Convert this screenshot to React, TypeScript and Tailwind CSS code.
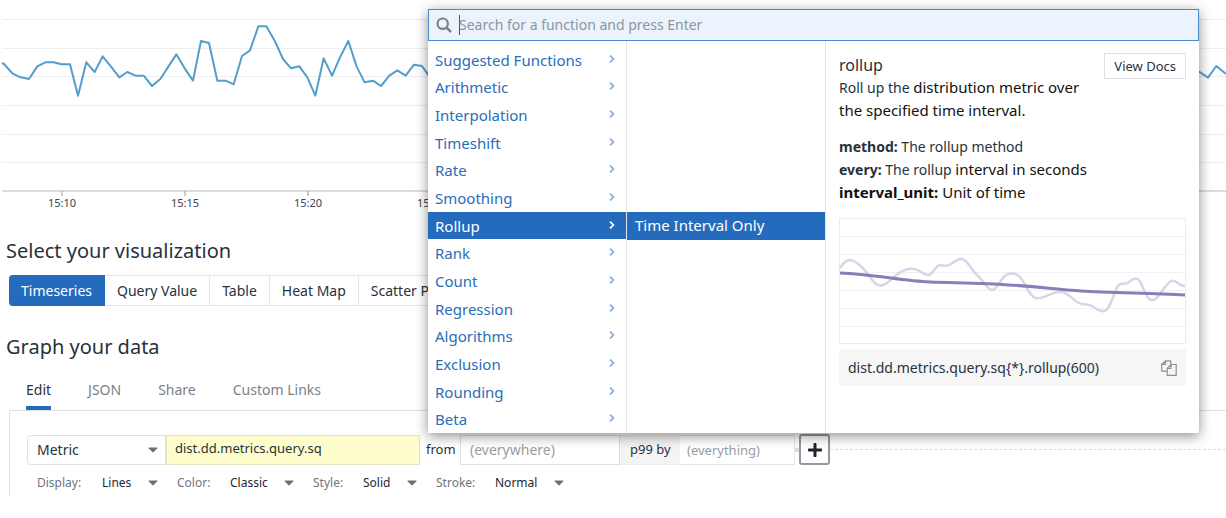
import { useState } from "react";
import { FaPlus } from "react-icons/fa";

const SERIES = [
  [6, 189], [12, 192], [38, 221], [62, 232], [87, 237], [112, 199], [136, 187], [160, 187], [185, 193], [210, 193],
  [234, 287], [259, 187], [284, 216], [308, 169], [333, 200], [358, 232], [382, 216], [406, 227], [431, 227],
  [456, 258], [481, 237], [505, 200], [529, 163], [554, 205], [579, 242], [603, 123], [627, 129], [652, 242],
  [677, 242], [701, 253], [726, 168], [750, 151], [775, 79], [799, 79], [824, 122], [849, 177], [873, 205],
  [898, 199], [922, 232], [946, 287], [971, 175], [996, 227], [1020, 172], [1045, 123], [1070, 200], [1094, 247],
  [1119, 242], [1143, 258], [1168, 227], [1192, 211], [1217, 227], [1242, 194], [1266, 198], [1290, 232],
  [3599, 216], [3624, 233], [3649, 198], [3678, 222],
];

const CATEGORIES = [
  "Suggested Functions", "Arithmetic", "Interpolation", "Timeshift", "Rate", "Smoothing", "Rollup",
  "Rank", "Count", "Regression", "Algorithms", "Exclusion", "Rounding", "Beta",
];

function TimeseriesChart() {
  const points = SERIES.map(([x, y]) => `${x / 3},${y / 3}`).join(" ");
  return (
    <svg className="block h-[215px] w-full" role="img" aria-label="Timeseries chart">
      {[19.5, 48.5, 76.5, 105.5, 134.5, 162.5].map((y) => (
        <line key={y} x1="2" x2="100%" y1={y} y2={y} stroke="#eeeeee" />
      ))}
      <line x1="2" x2="100%" y1="191" y2="191" stroke="#cfcfcf" strokeWidth="1.5" />
      <polyline points={points} fill="none" stroke="#559dcb" strokeWidth="2" strokeLinejoin="round" />
      {["15:10", "15:15", "15:20", "15:25"].map((label, i) => {
        const x = 62 + i * 123;
        return (
          <g key={label}>
            <line x1={x} x2={x} y1="191" y2="196" stroke="#999" />
            <text x={x} y="207" textAnchor="middle" fontSize="11" fill="#3b444d">
              {label}
            </text>
          </g>
        );
      })}
    </svg>
  );
}

function Caret() {
  return (
    <svg className="pointer-events-none h-[6px] w-[10px] shrink-0" viewBox="0 0 10 6" fill="#6b7077">
      <path d="M1 0.5h8a.5.5 0 0 1 .4.8L5.4 5.3a.6.6 0 0 1-.8 0L.6 1.3A.5.5 0 0 1 1 .5Z" />
    </svg>
  );
}

function Option({ id, label, value, className }: { id: string; label: string; value: string; className: string }) {
  return (
    <div className={`flex shrink-0 items-center ${className}`}>
      <label htmlFor={id} className="flex-1 text-[#6f767d]">
        {label}:
      </label>
      <div className="grid items-center">
        <select id={id} className="col-start-1 row-start-1 appearance-none bg-transparent pr-[26px] text-[#1c2733] outline-none">
          <option>{value}</option>
        </select>
        <span className="col-start-1 row-start-1 justify-self-end">
          <Caret />
        </span>
      </div>
    </div>
  );
}

function Preview() {
  return (
    <svg className="block h-[126px] w-full" viewBox="0 0 347 126" preserveAspectRatio="none" role="img" aria-label="Rollup preview">
      {[18.5, 36.5, 54.5, 72.5, 90.5, 108.5].map((y) => (
        <line key={y} x1="0" x2="347" y1={y} y2={y} stroke="#f1f1f3" />
      ))}
      <rect x=".5" y=".5" width="346" height="125" fill="none" stroke="#ebebee" />
      <path
        d="M1 50C5 44 8 42 11 42C20 43 29 56 34 63C38 68 41 68 44 67C51 65 55 57 62 54C67 51 73 50 78 52C82 53 86 58 90 57C94 56 96 48 101 47C104 47 106 49 110 47C114 45 119 40 123 41C129 42 132 52 138 57C143 61 148 71 153 72C159 72 162 58 169 56C173 55 177 55 180 58C186 63 190 79 197 80C205 82 213 73 222 74C230 74 234 84 243 86C247 87 249 86 253 88C257 91 261 94 265 93C273 92 275 68 281 66C285 65 287 67 290 64C293 62 295 59 299 61C304 65 306 80 312 82C319 84 325 67 332 63C338 61 340 69 346 68"
        fill="none" stroke="#d8d5e9" strokeWidth="2.5"
      />
      <path
        d="M1 55C34 56 63 63 91 64C119 65 146 65 170 67C195 68 219 72 243 73C270 75 309 75 346 77"
        fill="none" stroke="#8d7cb8" strokeWidth="3"
      />
    </svg>
  );
}

function SearchIcon() {
  return (
    <svg className="size-4 shrink-0" viewBox="0 0 16 16" fill="none" stroke="#7d8287" strokeLinecap="round">
      <circle cx="6.7" cy="6.7" r="5.2" strokeWidth="2.2" />
      <path d="m10.9 10.9 3.4 3.4" strokeWidth="2.6" />
    </svg>
  );
}

function CopyIcon() {
  return (
    <svg className="h-4 w-4" viewBox="0 0 16 16" fill="none" stroke="#8b9096" strokeWidth="1.2" strokeLinejoin="round">
      <path d="M6 11.2H.8V4.3L4.5.9h5.2v3.4M4.5.9v3.4H.8" />
      <path d="M10 4.5h5.2v10.8H6.2V8.3L10 4.5ZM10 4.5v4H6.2" />
    </svg>
  );
}

function FunctionMenu() {
  const [active, setActive] = useState("Rollup");
  return (
    <div className="absolute top-[9px] left-[428px] w-[771px] bg-white text-sm shadow-[0_3px_12px_rgba(0,0,0,0.45)]">
      <div className="flex h-8 items-center gap-[7px] border border-[#4e8acb] bg-[#ebf4fd] px-[7px]">
        <SearchIcon />
        <div className="flex flex-1 items-center">
          <span className="h-5 w-px bg-[#4c5258]" />
          <input
            aria-label="Search for a function"
            placeholder="Search for a function and press Enter"
            className="-ml-px w-full bg-transparent outline-none placeholder:text-[#8d949b]"
          />
        </div>
      </div>
      <div className="flex h-[392px]">
        <div className="flex w-[199px] flex-col border-r border-[#e4e5ea] pt-[5px]">
          {CATEGORIES.map((name) => (
            <button
              key={name}
              onClick={() => setActive(name)}
              className={`flex flex-1 items-center justify-between pr-[11px] pl-[7px] text-[15px] leading-5 ${
                name === active ? "bg-[#256bbd] text-white" : "text-[#2a6db9]"
              }`}
            >
              {name}
              <svg
                className={name === active ? "mb-[2px] h-2 w-[6px] text-white" : "mb-[2px] h-2 w-[6px] text-[#8aabd8]"}
                viewBox="0 0 6 8" fill="none" stroke="currentColor" strokeWidth="1.7"
              >
                <path d="M1 .7 4.4 4 1 7.3" />
              </svg>
            </button>
          ))}
        </div>
        <div className="w-[199px] border-r border-[#e4e5ea] pt-[171px]">
          <button className="flex h-7 w-full items-center bg-[#256bbd] px-2 text-[15px] text-white">Time Interval Only</button>
        </div>
        <div className="flex min-w-0 flex-1 flex-col px-[13px] pt-3 text-[#27323d]">
          <div className="flex h-[26px] items-start justify-between">
            <h3 className="text-base leading-6">rollup</h3>
            <button className="h-[26px] border border-[#dfe1e6] px-[9px] text-[13px]">View Docs</button>
          </div>
          <p className="-mt-[3px] w-64 text-sm leading-[23px]">
            Roll up the <span className="text-[15px] text-[#111]">distribution metric over the specified time interval.</span>
          </p>
          <dl className="mt-[14px] text-sm leading-[22px]">
            <div><dt className="inline font-bold">method:</dt> <dd className="inline">The rollup method</dd></div>
            <div><dt className="inline font-bold">every:</dt> <dd className="inline">The rollup <span className="text-[15px] text-[#111]">interval in seconds</span></dd></div>
            <div className="text-[15px] text-[#111]"><dt className="inline font-bold">interval_unit:</dt> <dd className="inline">Unit of time</dd></div>
          </dl>
          <div className="mt-[15px]">
            <Preview />
          </div>
          <div className="mt-[5px] flex h-[37px] items-center justify-between bg-[#f6f6f7] px-[9px]">
            <code className="font-['Noto_Sans',sans-serif]">{"dist.dd.metrics.query.sq{*}.rollup(600)"}</code>
            <button aria-label="Copy">
              <CopyIcon />
            </button>
          </div>
        </div>
      </div>
    </div>
  );
}

export default function App() {
  const [view, setView] = useState("Timeseries");
  const [tab, setTab] = useState("Edit");
  return (
    <main className="relative overflow-hidden bg-white pb-5 font-['Noto_Sans',sans-serif] text-[#27323d]">
      <TimeseriesChart />
      <h2 className="mt-[22px] pl-[6px] text-xl leading-7">Select your visualization</h2>
      <div className="mt-[10px] ml-[9px] flex text-sm">
        {["Timeseries", "Query Value", "Table", "Heat Map", "Scatter Plot"].map((name) => (
          <button
            key={name}
            onClick={() => setView(name)}
            className={`h-[31px] shrink-0 border-y border-r px-3 first:rounded-l-sm ${
              name === view ? "border-[#256bbd] bg-[#256bbd] text-white" : "border-[#e3e4e8] bg-white"
            }`}
          >
            {name}
          </button>
        ))}
      </div>
      <h2 className="mt-[27px] pl-[6px] text-xl leading-7">Graph your data</h2>
      <div className="mt-[13px] ml-[26px] flex gap-[37px] text-sm">
        {["Edit", "JSON", "Share", "Custom Links"].map((name) => (
          <button
            key={name}
            onClick={() => setTab(name)}
            className={`h-9 border-b-4 ${
              name === tab ? "border-[#256bbd] text-[#27323d]" : "border-transparent text-[#7b8187]"
            }`}
          >
            {name}
          </button>
        ))}
      </div>
      <section className="ml-[9px] border-t border-l border-[#e0e0e2] pt-[23px] pl-[17px]">
        <div className="flex h-[31px] items-center text-sm">
          <div className="grid w-[139px] shrink-0 items-center">
            <select aria-label="Source" className="col-start-1 row-start-1 h-[30px] w-full appearance-none rounded-l-sm border border-[#dfe0e4] bg-white pl-[9px]">
              <option>Metric</option>
            </select>
            <span className="col-start-1 row-start-1 justify-self-end pr-[8px]">
              <Caret />
            </span>
          </div>
          <input aria-label="Metric name" defaultValue="dist.dd.metrics.query.sq" className="h-[30px] w-[254px] shrink-0 border border-[#e3e3c8] bg-[#fefdcb] px-2 pb-1 text-[13px]" />
          <label htmlFor="scope" className="w-10 shrink-0 pl-[6px] text-[13px]">from</label>
          <input id="scope" placeholder="(everywhere)" className="h-[30px] w-[160px] shrink-0 border border-[#dfe0e4] bg-white px-[9px] placeholder:text-[#999da1]" />
          <label htmlFor="group" className="flex h-[30px] w-[60px] shrink-0 items-center border-y border-[#ececee] bg-[#f4f4f5] pl-[10px] text-[13px]">p99 by</label>
          <input id="group" placeholder="(everything)" className="h-[30px] w-[115px] shrink-0 border-y border-r border-[#e6e6e9] bg-white px-[7px] text-[13px] placeholder:text-[#999da1]" />
          <span className="h-1 w-1 shrink-0 bg-[#dcdcde]" />
          <button aria-label="Add function" className="flex size-[31px] shrink-0 items-center justify-center rounded-[3px] border-2 border-[#96989c] bg-white">
            <FaPlus className="size-4 text-[#1c2733]" />
          </button>
          <span className="flex-1 border-t border-dashed border-[#dcdcde]" />
        </div>
        <div className="mt-1 flex h-7 gap-[19px] pl-[10px] text-xs">
          <Option id="display" label="Display" value="Lines" className="w-[121px]" />
          <Option id="color" label="Color" value="Classic" className="w-[117px]" />
          <Option id="style" label="Style" value="Solid" className="w-[104px]" />
          <Option id="stroke" label="Stroke" value="Normal" className="w-[128px]" />
        </div>
      </section>
      <FunctionMenu />
    </main>
  );
}
